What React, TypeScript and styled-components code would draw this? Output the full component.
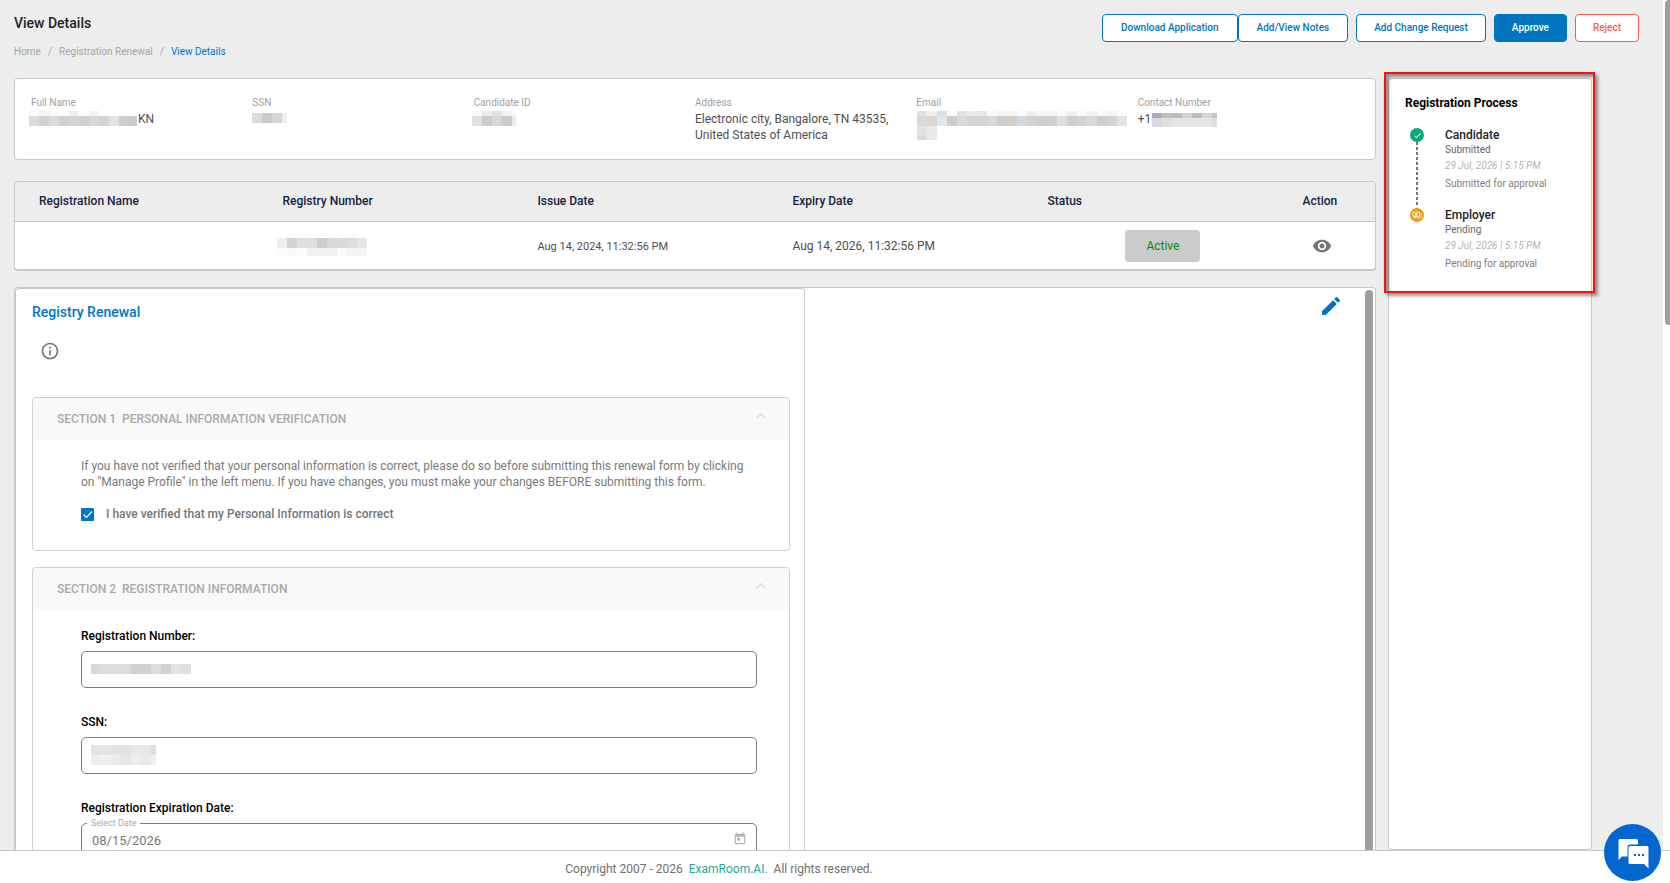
import React from "react";
import styled, { createGlobalStyle } from "styled-components";
import { MdEdit, MdInfoOutline, MdVisibility, MdKeyboardArrowUp, MdToday, MdOutlinePayments, MdCheck } from "react-icons/md";

const Global = createGlobalStyle`
  *, *::before, *::after { box-sizing: border-box; }
  body { margin: 0; background: #ededed; font-family: Roboto, "Liberation Sans", sans-serif; font-size: 12px; line-height: 16px; color: #4f4f4f; }
  button, input { font-family: inherit; }
  h1, h2, h3, p, ol, dl, dd { margin: 0; padding: 0; }
`;

const Page = styled.div`
  height: 100vh;
  display: flex;
  flex-direction: column;
`;

const Viewport = styled.main`
  flex: 1;
  min-height: 0;
  display: flex;
`;

const Content = styled.div`
  flex: 1;
  min-width: 0;
  display: flex;
  flex-direction: column;
  padding: 14px 24px 0 14px;
`;

const PageScroll = styled.div`
  width: 7px;
  flex: none;
  background: #fff;
  padding-left: 2px;
`;

const PageThumb = styled.div`
  height: 325px;
  background: #9f9f9f;
  border-radius: 4px 0 0 4px;
`;

const TopBar = styled.header`
  display: flex;
  justify-content: space-between;
  align-items: flex-start;
  height: 64px;
`;

const PageTitle = styled.h1`
  font-size: 14px;
  line-height: 18px;
  font-weight: 500;
  color: #222;
`;

const Crumbs = styled.nav`
  display: flex;
  margin-top: 12px;
  gap: 7px;
  font-size: 10px;
  line-height: 16px;
  color: #a5a5a5;
`;

const Crumb = styled.a<{ $current?: boolean }>`
  color: ${(p) => (p.$current ? "#0076c1" : "#a5a5a5")};
  text-decoration: none;
`;

const Actions = styled.div`
  display: flex;
  gap: 8px;
`;

const ActionButton = styled.button<{ $tone?: "fill" | "danger" }>`
  height: 28px;
  padding: 0 17px;
  border: 1px solid ${(p) => (p.$tone === "danger" ? "#ff5a4f" : "#0076c1")};
  border-radius: 4px;
  background: ${(p) => (p.$tone === "fill" ? "#0076c1" : "#fff")};
  color: ${(p) => (p.$tone === "fill" ? "#fff" : p.$tone === "danger" ? "#ff5a4f" : "#0076c1")};
  font-size: 10px;
  line-height: 12px;
  font-weight: 500;
  white-space: nowrap;
`;

const ActionPair = styled.div`
  display: flex;
  ${ActionButton} { padding: 0 18px; }
`;

const Columns = styled.div`
  flex: 1;
  min-height: 0;
  display: flex;
  gap: 12px;
  padding-right: 47px;
`;

const MainColumn = styled.div`
  flex: 1;
  min-width: 0;
  display: flex;
  flex-direction: column;
`;

const Card = styled.section`
  background: #fff;
  border: 1px solid #c8c8c8;
  border-radius: 4px;
`;

const Profile = styled(Card)`
  padding: 16px;
  min-height: 82px;
  margin-bottom: 21px;
`;

const ProfileList = styled.dl`
  display: grid;
  grid-template-columns: repeat(6, minmax(0, 1fr));
`;

const ProfileLabel = styled.dt`
  font-size: 10px;
  color: #a0a0a0;
`;

const ProfileValue = styled.dd`
  display: flex;
  gap: 1px;
  padding-right: 8px;
`;

const MosaicBox = styled.span<{ $shift?: number; $w?: number }>`
  display: inline-flex;
  flex-direction: column;
  flex: none;
  overflow: hidden;
  width: ${(p) => (p.$w ? `${p.$w}px` : "auto")};
  margin-left: ${(p) => p.$shift ?? 0}px;
`;

const MosaicRow = styled.span<{ $h: number }>`
  display: flex;
  height: ${(p) => p.$h}px;
`;

const Cell = styled.span<{ $c: string }>`
  flex: none;
  width: 10px;
  background: ${(p) => p.$c};
`;

type Strip = [number, string];

function Mosaic({ rows, shift, width }: { rows: Strip[]; shift?: number; width?: number }) {
  return (
    <MosaicBox $shift={shift} $w={width} aria-hidden="true">
      {rows.map(([h, cells], i) => (
        <MosaicRow key={i} $h={h}>
          {cells.split(" ").map((c, j) => (
            <Cell key={j} $c={"#" + c} />
          ))}
        </MosaicRow>
      ))}
    </MosaicBox>
  );
}

const nameRows: Strip[] = [
  [5, "f9f9f9 f4f4f4 fafafa fff f0f1f2 fff f3f3f3 fff fff fff fff"],
  [10, "dcdcdc d2d2d0 ded9d6 cdd0d6 d6d4d2 d4cfcc d5d7d8 d3d5d5 e1e3e2 d0cfce c9cccf"],
];
const ssnRows: Strip[] = [[2, "fff fff fff"], [10, "dcdcd7 c9cacc d7d5d3 ebedef"]];
const idRows: Strip[] = [[5, "f8f8f8 ebebea e2e2e2 f1f1f1 f8f8f8"], [10, "e2dfdd cdccca d6d8d7 cdccca e8ecf0"]];
const emailRows: Strip[] = [
  [5, "e2e2e3 f4f0ee dddfe2 fafafa e4e0dd eaebef e7e7ea fafafa f6f6f6 f4f4f4 fafafa eeeeee f8f8f8 f5f5f5 fafafa f1f1f1 fafafa f2f2f2 fafafa f6f6f6 fafafa"],
  [10, "d8d9dc dcd7d3 e3e5e7 cbcdd0 dadad8 d2d4d6 d1d5d5 d8d8d8 cfcfcf d0cdca d3d7de d3d3ce cfcfcf d0d0d2 dfdfe0 cfcfcf d2d4d4 dadada cfcfcf d3d3d3 e3e5e5"],
  [10, "e1e2e5 e8e8e8"],
  [4, "d9dadc eaeaea"],
];
const phoneRows: Strip[] = [
  [2, "fff"],
  [5, "acafb5 c0bfbe bcbcbc d3d3d0 bcbcbe d2d3d3 c4c4c4"],
  [9, "d8d9e0 e2dfdf e6e4e4 e4e4e2 e4e6e6 e6e6e4 dededf"],
];
const registryRows: Strip[] = [
  [10, "ededed d3d4d5 e0e0e0 e0dfdf cccdcf dadada d9d9da dcdde0 e6e6e6"],
  [8, "fbfbfb f8f8f8 fbfbfb f1f1f1 f2f2f2 f1f1f1 f9f9f9 f4f4f4 f5f5f5"],
];
const numberRows: Strip[] = [[10, "d8d8d7 dddcdb dcdde1 dddddc d1d1d1 d2d2d2 dddddd d5d0cc e0e4e3 dfe0e2"]];
const ssnFieldRows: Strip[] = [
  [10, "e4e3e0 e4e5e7 e5e3e2 e4e3e3 e6e8e7 e6e6e6 dfe0e2"],
  [10, "eeeeee eff1f1 ebeae9 e8e6e4 eceeed e9e9ea f0f1f4"],
];

const TableCard = styled(Card)`
  overflow: hidden;
  flex: none;
  margin-bottom: 16px;
  border-bottom-width: 2px;
`;

const Table = styled.table`
  width: 100%;
  table-layout: fixed;
  border-collapse: collapse;
  th, td { padding: 0 0 0 24px; text-align: left; }
  th { height: 39px; background: #ededed; border-bottom: 1px solid #c8c8c8; font-weight: 500; color: #14233c; }
  td { height: 48px; padding-top: 2px; }
`;

const Col = styled.col<{ $w?: string }>`
  width: ${(p) => p.$w ?? "auto"};
`;

const SmallText = styled.span`
  font-size: 11px;
`;

const StatusButton = styled.button`
  display: block;
  width: 75px;
  height: 32px;
  margin-left: 78px;
  border: 0;
  border-radius: 4px;
  background: #cbcbcb;
  color: #0a8a0a;
  font-size: 12px;
`;

const IconButton = styled.button<{ $color: string }>`
  display: flex;
  padding: 0;
  border: 0;
  background: none;
  color: ${(p) => p.$color};
`;

const EyeSlot = styled.div`
  padding-left: 10px;
`;

const FormArea = styled(Card)`
  flex: 1;
  min-height: 0;
  display: flex;
  overflow: hidden;
  border-bottom: 0;
  border-radius: 4px 4px 0 0;
`;

const FormPane = styled.div`
  width: 58.1%;
  flex: none;
  padding: 14px 14px 0 16px;
  border: 1px solid #c8c8c8;
  border-bottom: 0;
  border-radius: 4px 4px 0 0;
`;

const EditPane = styled.div`
  flex: 1;
  display: flex;
  justify-content: flex-end;
  align-items: flex-start;
  padding: 6px 22px 0 0;
`;

const PaneThumb = styled.div`
  width: 8px;
  margin: 2px 2px 0 0;
  border-radius: 4px 4px 0 0;
  background: #9f9f9f;
`;

const FormTitle = styled.h2`
  font-size: 14px;
  line-height: 18px;
  font-weight: 500;
  color: #0076c1;
`;

const InfoRow = styled.div`
  display: flex;
  height: 76px;
  padding: 20px 0 0 8px;
`;

const Section = styled.section`
  border: 1px solid #d0d0d0;
  border-radius: 4px;
  margin-bottom: 16px;
`;

const SectionHead = styled.header`
  display: flex;
  justify-content: space-between;
  height: 42px;
  padding: 8px 18px 0 24px;
  background: #f9f9f9;
  border-radius: 4px;
`;

const SectionTitle = styled.h3`
  display: flex;
  gap: 6px;
  padding-top: 5px;
  font-size: 12px;
  font-weight: 500;
  color: #a9a9a9;
`;

const SectionBody = styled.div`
  padding: 18px 32px 24px 48px;
`;

const Paragraph = styled.p`
  color: #7a7a7a;
`;

const CheckRow = styled.label`
  display: flex;
  align-items: center;
  gap: 12px;
  margin: 16px 0 4px;
  font-weight: 500;
  color: #757575;
`;

const CheckHolder = styled.span`
  position: relative;
  display: flex;
  svg { position: absolute; inset: 0; pointer-events: none; }
`;

const Check = styled.input`
  appearance: none;
  width: 13px;
  height: 13px;
  margin: 0;
  border-radius: 1px;
  background: #0076c1;
`;

const Field = styled.div`
  position: relative;
  margin-bottom: 26px;
`;

const FieldLabel = styled.label`
  display: block;
  padding-bottom: 7px;
  font-weight: 500;
  color: #000;
`;

const FieldBox = styled.input`
  display: block;
  width: 100%;
  height: 37px;
  padding: 0 10px 2px;
  border: 1px solid #7c7c7c;
  border-radius: 5px;
  background: #fff;
  color: #7a7a7a;
  font-size: 13px;
`;

const FieldMask = styled.div`
  position: absolute;
  left: 10px;
  bottom: 7px;
  height: 24px;
  display: flex;
  align-items: center;
`;

const FloatLabel = styled.span`
  position: absolute;
  left: 6px;
  top: 15px;
  padding: 0 4px;
  background: #fff;
  font-size: 9px;
  color: #a9a9a9;
`;

const CalendarButton = styled(IconButton)`
  position: absolute;
  right: 10px;
  top: 32px;
`;

const SidePanel = styled(Card)`
  position: relative;
  width: 204px;
  flex: none;
  padding: 16px;
`;

const Highlight = styled.div`
  position: absolute;
  left: -5px;
  right: -4px;
  top: -7px;
  height: 221px;
  border: 2px solid #fb0f0f;
  box-shadow: 3px 3px 3px rgba(0, 0, 0, 0.4), inset 3px 3px 3px rgba(0, 0, 0, 0.4);
  pointer-events: none;
`;

const SideTitle = styled.h2`
  font-size: 12px;
  line-height: 16px;
  font-weight: 700;
  color: #000;
  margin-bottom: 16px;
`;

const Steps = styled.ol`
  list-style: none;
`;

const Step = styled.li`
  display: flex;
  gap: 21px;
  height: 80px;
  padding-left: 5px;
`;

const StepRail = styled.div<{ $last?: boolean }>`
  width: 14px;
  display: flex;
  flex-direction: column;
  align-items: center;
  padding-top: 1px;
  &::after {
    content: "";
    display: ${(p) => (p.$last ? "none" : "block")};
    flex: 1;
    width: 2px;
    background: repeating-linear-gradient(#757575 0 3px, transparent 3px 5px);
  }
`;

const StepDot = styled.span<{ $c: string }>`
  display: flex;
  align-items: center;
  justify-content: center;
  width: 14px;
  height: 14px;
  border-radius: 50%;
  background: ${(p) => p.$c};
  color: #fff;
`;

const StepName = styled.h3`
  font-size: 12px;
  line-height: 16px;
  font-weight: 500;
  color: #222;
`;

const StepLine = styled.p<{ $kind?: "date" | "note" }>`
  font-size: 10px;
  line-height: 14px;
  color: ${(p) => (p.$kind === "date" ? "#b5b5b5" : p.$kind === "note" ? "#808080" : "#666")};
  font-style: ${(p) => (p.$kind === "date" ? "italic" : "normal")};
  margin-bottom: ${(p) => (p.$kind === "date" ? 4 : p.$kind === "note" ? 0 : 2)}px;
`;

const Footer = styled.footer`
  height: 33px;
  flex: none;
  display: flex;
  justify-content: center;
  align-items: center;
  gap: 6px;
  padding: 4px 232px 0 0;
  border-top: 1px solid #c8c8c8;
  background: #fff;
  color: #6f6f6f;
  a { color: #26a69a; text-decoration: none; }
`;

const ChatButton = styled.button`
  position: fixed;
  right: 9px;
  bottom: 2px;
  width: 57px;
  height: 57px;
  padding: 0;
  border: 0;
  border-radius: 50%;
  background: #0466cf;
  svg { display: block; }
`;

function ChatIcon() {
  return (
    <svg width="57" height="57" viewBox="0 0 57 57" aria-hidden="true">
      <path d="M15.500 15h17a1.500 1.500 0 0 1 1.500 1.500v4H26a2.500 2.500 0 0 0-2.500 2.500v9.500H18L14.500 36V16z" fill="#fff" />
      <path d="M26 22h17a1.500 1.500 0 0 1 1.500 1.500V44.500L40 40H26a1.500 1.500 0 0 1-1.500-1.500v-15A1.500 1.500 0 0 1 26 22z" fill="#fff" />
      <path d="M30 30h2v2h-2zM34 30h2v2h-2zM38 30h2v2h-2z" fill="#0466cf" />
    </svg>
  );
}

function StepItem({ name, state, note, color, icon, last }: { name: string; state: string; note: string; color: string; icon: React.ReactNode; last?: boolean }) {
  return (
    <Step>
      <StepRail $last={last}>
        <StepDot $c={color}>{icon}</StepDot>
      </StepRail>
      <div>
        <StepName>{name}</StepName>
        <StepLine>{state}</StepLine>
        <StepLine $kind="date">29 Jul, 2026 | 5:15 PM</StepLine>
        <StepLine $kind="note">{note}</StepLine>
      </div>
    </Step>
  );
}

function FormSection({ number, title, children }: { number: number; title: string; children: React.ReactNode }) {
  return (
    <Section>
      <SectionHead>
        <SectionTitle>
          <span>SECTION {number}</span>
          <span>{title}</span>
        </SectionTitle>
        <IconButton $color="#dedfe1" aria-label={`Collapse section ${number}`}>
          <MdKeyboardArrowUp size={20} />
        </IconButton>
      </SectionHead>
      <SectionBody>{children}</SectionBody>
    </Section>
  );
}

export default function App() {
  return (
    <Page>
      <Global />
      <Viewport>
        <Content>
          <TopBar>
            <div>
              <PageTitle>View Details</PageTitle>
              <Crumbs aria-label="Breadcrumb">
                <Crumb href="#home">Home</Crumb>
                <span>/</span>
                <Crumb href="#renewal">Registration Renewal</Crumb>
                <span>/</span>
                <Crumb href="#details" $current>View Details</Crumb>
              </Crumbs>
            </div>
            <Actions>
              <ActionPair>
                <ActionButton>Download Application</ActionButton>
                <ActionButton>Add/View Notes</ActionButton>
              </ActionPair>
              <ActionButton>Add Change Request</ActionButton>
              <ActionButton $tone="fill">Approve</ActionButton>
              <ActionButton $tone="danger">Reject</ActionButton>
            </Actions>
          </TopBar>
          <Columns>
            <MainColumn>
              <Profile>
                <ProfileList>
                  <div>
                    <ProfileLabel>Full Name</ProfileLabel>
                    <ProfileValue><Mosaic rows={nameRows} shift={-2} width={108} />KN</ProfileValue>
                  </div>
                  <div>
                    <ProfileLabel>SSN</ProfileLabel>
                    <ProfileValue><Mosaic rows={ssnRows} width={35} /></ProfileValue>
                  </div>
                  <div>
                    <ProfileLabel>Candidate ID</ProfileLabel>
                    <ProfileValue><Mosaic rows={idRows} shift={-2} width={44} /></ProfileValue>
                  </div>
                  <div>
                    <ProfileLabel>Address</ProfileLabel>
                    <ProfileValue>Electronic city, Bangalore, TN 43535, United States of America</ProfileValue>
                  </div>
                  <div>
                    <ProfileLabel>Email</ProfileLabel>
                    <ProfileValue><Mosaic rows={emailRows} shift={1} /></ProfileValue>
                  </div>
                  <div>
                    <ProfileLabel>Contact Number</ProfileLabel>
                    <ProfileValue>+1<Mosaic rows={phoneRows} width={65} /></ProfileValue>
                  </div>
                </ProfileList>
              </Profile>
              <TableCard>
                <Table>
                  <colgroup>
                    <Col $w="17.9%" />
                    <Col $w="18.75%" />
                    <Col $w="18.75%" />
                    <Col $w="18.75%" />
                    <Col $w="18.75%" />
                    <Col />
                  </colgroup>
                  <thead>
                    <tr>
                      <th>Registration Name</th>
                      <th>Registry Number</th>
                      <th>Issue Date</th>
                      <th>Expiry Date</th>
                      <th>Status</th>
                      <th>Action</th>
                    </tr>
                  </thead>
                  <tbody>
                    <tr>
                      <td />
                      <td><Mosaic rows={registryRows} shift={-5} /></td>
                      <td><SmallText>Aug 14, 2024, 11:32:56 PM</SmallText></td>
                      <td>Aug 14, 2026, 11:32:56 PM</td>
                      <td><StatusButton>Active</StatusButton></td>
                      <td>
                        <EyeSlot>
                          <IconButton $color="#757575" aria-label="View registration"><MdVisibility size={20} /></IconButton>
                        </EyeSlot>
                      </td>
                    </tr>
                  </tbody>
                </Table>
              </TableCard>
              <FormArea>
                <FormPane>
                  <FormTitle>Registry Renewal</FormTitle>
                  <InfoRow>
                    <IconButton $color="#757575" aria-label="Information"><MdInfoOutline size={20} /></IconButton>
                  </InfoRow>
                  <FormSection number={1} title="PERSONAL INFORMATION VERIFICATION">
                    <Paragraph>
                      If you have not verified that your personal information is correct, please do so before submitting this renewal form by clicking on "Manage Profile" in the left menu. If you have changes, you must make your changes BEFORE submitting this form.
                    </Paragraph>
                    <CheckRow>
                      <CheckHolder>
                        <Check type="checkbox" defaultChecked />
                        <svg width="13" height="13" viewBox="0 0 13 13"><path d="M2.500 6.500l3 3 5.500-6" fill="none" stroke="#fff" strokeWidth="1.200" /></svg>
                      </CheckHolder>
                      I have verified that my Personal Information is correct
                    </CheckRow>
                  </FormSection>
                  <FormSection number={2} title="REGISTRATION INFORMATION">
                    <Field>
                      <FieldLabel htmlFor="regNumber">Registration Number:</FieldLabel>
                      <FieldBox id="regNumber" />
                      <FieldMask><Mosaic rows={numberRows} /></FieldMask>
                    </Field>
                    <Field>
                      <FieldLabel htmlFor="ssn">SSN:</FieldLabel>
                      <FieldBox id="ssn" />
                      <FieldMask><Mosaic rows={ssnFieldRows} width={65} /></FieldMask>
                    </Field>
                    <Field>
                      <FieldLabel htmlFor="expiry">Registration Expiration Date:</FieldLabel>
                      <FieldBox id="expiry" defaultValue="08/15/2026" />
                      <FloatLabel>Select Date</FloatLabel>
                      <CalendarButton $color="#b5b5b5" aria-label="Open calendar"><MdToday size={14} /></CalendarButton>
                    </Field>
                  </FormSection>
                </FormPane>
                <EditPane>
                  <IconButton $color="#0076c1" aria-label="Edit"><MdEdit size={24} /></IconButton>
                </EditPane>
                <PaneThumb />
              </FormArea>
            </MainColumn>
            <SidePanel>
              <SideTitle>Registration Process</SideTitle>
              <Steps>
                <StepItem name="Candidate" state="Submitted" note="Submitted for approval" color="#0aab72" icon={<MdCheck size={9} />} />
                <StepItem name="Employer" state="Pending" note="Pending for approval" color="#f09a0c" icon={<MdOutlinePayments size={10} />} last />
              </Steps>
              <Highlight />
            </SidePanel>
          </Columns>
        </Content>
        <PageScroll><PageThumb /></PageScroll>
      </Viewport>
      <Footer>
        <span>Copyright 2007 - 2026</span>
        <a href="#examroom">ExamRoom.AI.</a>
        <span>All rights reserved.</span>
      </Footer>
      <ChatButton aria-label="Open chat"><ChatIcon /></ChatButton>
    </Page>
  );
}
